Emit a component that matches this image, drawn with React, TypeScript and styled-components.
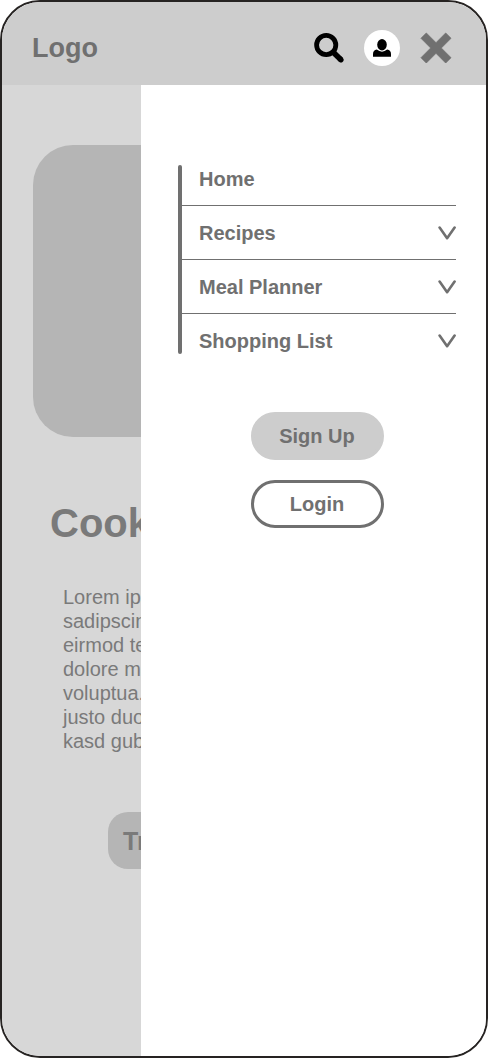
import React from "react";
import styled, { createGlobalStyle } from "styled-components";

const GlobalStyle = createGlobalStyle`
  * { box-sizing: border-box; }
  body {
    margin: 0;
    background: #fff;
    font-family: "Liberation Sans", Arial, Helvetica, sans-serif;
    color: #707070;
  }
  button { font: inherit; color: inherit; cursor: pointer; }
`;

const Screen = styled.div`
  display: flex;
  flex-direction: column;
  min-height: 100vh;
  border: 2px solid #262322;
  border-radius: 40px;
  overflow: hidden;
`;

const Header = styled.header`
  display: flex;
  align-items: center;
  justify-content: space-between;
  height: 83px;
  padding: 8px 34px 0 30px;
  background: #cdcdcd;
`;

const Logo = styled.a`
  font-size: 27px;
  line-height: 32px;
  font-weight: 700;
  color: inherit;
  text-decoration: none;
`;

const Actions = styled.div`
  display: flex;
  align-items: center;
  gap: 20px;
`;

const IconButton = styled.button<{ $round?: boolean }>`
  display: flex;
  align-items: center;
  justify-content: center;
  height: 36px;
  width: ${(p) => (p.$round ? "36px" : "auto")};
  padding: 0;
  border: 0;
  border-radius: ${(p) => (p.$round ? "50%" : "0")};
  background: ${(p) => (p.$round ? "#fff" : "transparent")};
`;

const Content = styled.div`
  flex: 1;
  display: grid;
  grid-template-columns: 139px 1fr;
`;

const Page = styled.main`
  min-width: 0;
  overflow: hidden;
  padding: 60px 0 60px 31px;
  background: #d7d7d7;
  color: #7a7a7a;
  white-space: nowrap;
`;

const Hero = styled.div`
  height: 292px;
  border-radius: 40px 0 0 40px;
  background: #b5b5b5;
`;

const Title = styled.h1`
  margin: 62px 0 38px 17px;
  font-size: 40px;
  line-height: 48px;
`;

const Intro = styled.p`
  margin: 0 0 59px 30px;
  font-size: 20px;
  line-height: 24px;
`;

const TryButton = styled.button`
  display: block;
  height: 57px;
  margin-left: 75px;
  padding: 2px 15px 0;
  border: 0;
  border-radius: 20px;
  background: #b5b5b5;
  font-size: 25px;
  font-weight: 700;
`;

const Drawer = styled.aside`
  padding: 67px 30px 40px 37px;
  background: #fff;
  font-size: 20px;
  line-height: 24px;
  font-weight: 700;
`;

const Nav = styled.nav`
  display: flex;
`;

const Rail = styled.span`
  width: 4px;
  margin: 13px 0 14px;
  border-radius: 2px;
  background: #707070;
`;

const MenuList = styled.ul`
  flex: 1;
  margin: 0;
  padding: 0;
  list-style: none;
`;

const MenuItem = styled.li`
  height: 54px;
  border-bottom: 1px solid #707070;
  &:last-child { border-bottom-color: transparent; }
`;

const MenuLink = styled.a`
  display: flex;
  align-items: center;
  height: 100%;
  padding-left: 17px;
  color: inherit;
  text-decoration: none;
`;

const MenuToggle = styled.button`
  display: flex;
  align-items: center;
  justify-content: space-between;
  width: 100%;
  height: 100%;
  padding: 0 0 0 17px;
  border: 0;
  background: transparent;
  text-align: left;
`;

const AuthButtons = styled.div`
  display: flex;
  flex-direction: column;
  align-items: center;
  gap: 20px;
  margin-top: 44px;
`;

const PillButton = styled.button<{ $outlined?: boolean }>`
  width: 133px;
  height: 48px;
  padding: 0;
  border: 3px solid ${(p) => (p.$outlined ? "#707070" : "#cdcdcd")};
  border-radius: 24px;
  background: ${(p) => (p.$outlined ? "#fff" : "#cdcdcd")};
`;

const SearchIcon = () => (
  <svg width="30" height="30" viewBox="0 0 30 30" fill="none" stroke="#000" aria-hidden="true">
    <circle cx="12.2" cy="12" r="9.6" strokeWidth="4.8" />
    <path d="M19 19L27.2 27" strokeWidth="5.6" />
    <path d="M26 25.8L27 26.8" strokeWidth="5.2" strokeLinecap="round" />
  </svg>
);

const UserIcon = () => (
  <svg width="18" height="18" viewBox="0 0 18 18" aria-hidden="true">
    <ellipse cx="9" cy="5.7" rx="4.8" ry="5.7" />
    <path d="M0 17.8V15Q0 11.2 3.8 10.5Q9 14.8 14.2 10.5Q18 11.2 18 15V17.8Z" />
  </svg>
);

const CloseIcon = () => (
  <svg width="32" height="32" viewBox="0 0 32 32" aria-hidden="true">
    <path
      d="M6.3 1L16 10.7L25.7 1L31 6.3L21.3 16L31 25.7L25.7 31L16 21.3L6.3 31L1 25.7L10.7 16L1 6.3Z"
      fill="#707070"
      stroke="#707070"
      strokeWidth="0.8"
      strokeLinejoin="round"
    />
  </svg>
);

const Chevron = () => (
  <svg width="18" height="14" viewBox="0 0 18 14" fill="none" aria-hidden="true">
    <path
      d="M1.6 1.5L9.1 12.2L16.6 1.5"
      stroke="#707070"
      strokeWidth="2.6"
      strokeLinecap="round"
      strokeLinejoin="round"
    />
  </svg>
);

const sections = ["Recipes", "Meal Planner", "Shopping List"];

const introLines = [
  "Lorem ipsum",
  "sadipscing",
  "eirmod tempor",
  "dolore magna",
  "voluptua. At",
  "justo duo",
  "kasd gubergren",
];

export default function App() {
  return (
    <>
      <GlobalStyle />
      <Screen>
        <Header>
          <Logo href="#">Logo</Logo>
          <Actions>
            <IconButton type="button" aria-label="Search">
              <SearchIcon />
            </IconButton>
            <IconButton type="button" aria-label="Account" $round>
              <UserIcon />
            </IconButton>
            <IconButton type="button" aria-label="Close menu">
              <CloseIcon />
            </IconButton>
          </Actions>
        </Header>
        <Content>
          <Page>
            <Hero />
            <Title>Cooking</Title>
            <Intro>
              {introLines.map((line) => (
                <React.Fragment key={line}>
                  {line}
                  <br />
                </React.Fragment>
              ))}
            </Intro>
            <TryButton type="button">Try</TryButton>
          </Page>
          <Drawer>
            <Nav aria-label="Main">
              <Rail />
              <MenuList>
                <MenuItem>
                  <MenuLink href="#">Home</MenuLink>
                </MenuItem>
                {sections.map((name) => (
                  <MenuItem key={name}>
                    <MenuToggle type="button" aria-expanded="false">
                      {name}
                      <Chevron />
                    </MenuToggle>
                  </MenuItem>
                ))}
              </MenuList>
            </Nav>
            <AuthButtons>
              <PillButton type="button">Sign Up</PillButton>
              <PillButton type="button" $outlined>
                Login
              </PillButton>
            </AuthButtons>
          </Drawer>
        </Content>
      </Screen>
    </>
  );
}
